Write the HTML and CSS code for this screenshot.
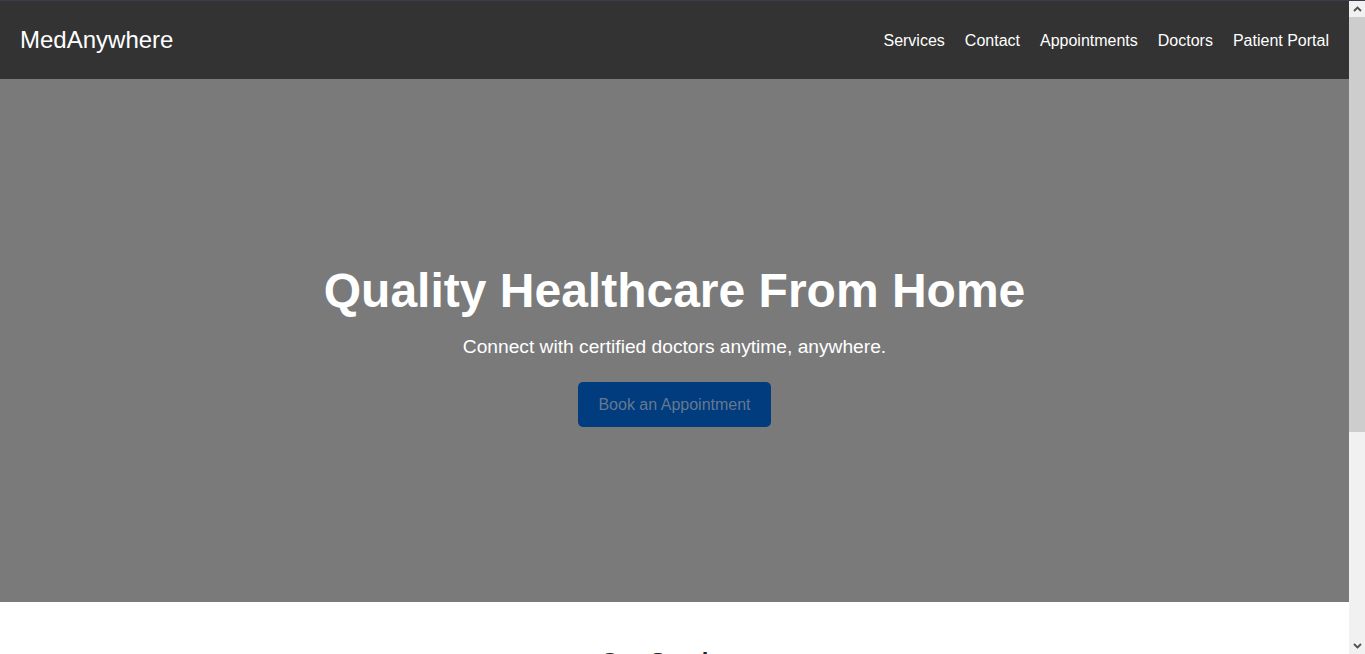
FILE: index.html
```html
<!DOCTYPE html>
<html lang="en">
<head>
<meta charset="utf-8">
<title>MedAnywhere</title>
<link rel="stylesheet" href="styles.css">
</head>
<body>
<header class="navbar">
  <div class="logo">MedAnywhere</div>
  <nav class="nav-links">
    <a href="#">Services</a>
    <a href="#">Contact</a>
    <a href="#">Appointments</a>
    <a href="#">Doctors</a>
    <a href="#">Patient Portal</a>
  </nav>
</header>
<section class="hero">
  <h1 class="hero-title">Quality Healthcare From Home</h1>
  <p class="hero-sub">Connect with certified doctors anytime, anywhere.</p>
  <a class="hero-btn" href="#">Book an Appointment</a>
</section>
<section class="services">
  <h2 class="services-title">Our Services</h2>
  <div class="service-grid">
    <div class="service-card">
      <h3>Virtual Consultations</h3>
      <p>Talk to a doctor via secure video calls from anywhere.</p>
    </div>
    <div class="service-card">
      <h3>Online Prescriptions</h3>
      <p>Get prescriptions sent directly to your pharmacy.</p>
    </div>
    <div class="service-card">
      <h3>Health Records</h3>
      <p>Access your medical history whenever you need it.</p>
    </div>
  </div>
</section>
<div class="scrollbar" aria-hidden="true">
  <div class="sb-arrow">
    <svg width="9" height="6" viewBox="0 0 9 6"><path d="M1 5 L4.5 1.5 L8 5" fill="none" stroke="#505050" stroke-width="1.8"/></svg>
  </div>
  <div class="sb-thumb"></div>
  <div class="sb-track"></div>
  <div class="sb-arrow">
    <svg width="9" height="6" viewBox="0 0 9 6"><path d="M1 1 L4.5 4.5 L8 1" fill="none" stroke="#505050" stroke-width="1.8"/></svg>
  </div>
</div>
</body>
</html>
```
FILE: styles.css
```css
* { box-sizing: border-box; }
html, body { margin: 0; padding: 0; }
body {
  font-family: "Liberation Sans", Arial, sans-serif;
  color: #333;
  background: #fff;
  margin-right: 16px;
}
.navbar {
  display: flex;
  align-items: center;
  justify-content: space-between;
  height: 79px;
  padding: 0 20px;
  background: #333;
  border-top: 1px solid #3d3b4a;
}
.logo {
  color: #fff;
  font-size: 24px;
}
.nav-links {
  display: flex;
  gap: 20px;
  padding-top: 2px;
}
.nav-links a {
  color: #fff;
  text-decoration: none;
  font-size: 16px;
}
.hero {
  height: 523px;
  background: #7a7a7a;
  display: flex;
  flex-direction: column;
  align-items: center;
  justify-content: center;
  text-align: center;
  color: #fff;
  padding-top: 8px;
}
.hero-title {
  margin: 0 0 18px;
  font-size: 48px;
  font-weight: bold;
}
.hero-sub {
  margin: 0 0 24px;
  font-size: 19.2px;
}
.hero-btn {
  display: inline-block;
  background: #003c7e;
  color: #66788f;
  text-decoration: none;
  font-size: 16px;
  line-height: 19px;
  padding: 13px 20px;
  border-radius: 5px;
}
.services {
  padding: 46px 20px 60px;
  text-align: center;
}
.services-title {
  margin: 0 0 30px;
  font-size: 24px;
  color: #222;
}
.service-grid {
  display: flex;
  gap: 20px;
  justify-content: center;
}
.service-card {
  width: 300px;
  padding: 20px;
  border: 1px solid #ddd;
  border-radius: 8px;
  background: #f9f9f9;
}
.service-card h3 {
  margin: 0 0 10px;
  font-size: 20px;
}
.service-card p {
  margin: 0;
  font-size: 16px;
  line-height: 1.4;
}
.scrollbar {
  position: fixed;
  top: 0;
  right: 0;
  width: 16px;
  height: 100vh;
  display: flex;
  flex-direction: column;
  background: #f1f1f1;
  border-top: 1px solid #3d3b4a;
}
.sb-arrow {
  height: 16px;
  display: flex;
  align-items: center;
  justify-content: center;
  flex-shrink: 0;
}
.sb-thumb {
  height: 415px;
  background: #cdcdcd;
  flex-shrink: 0;
}
.sb-track {
  flex: 1;
}
```
